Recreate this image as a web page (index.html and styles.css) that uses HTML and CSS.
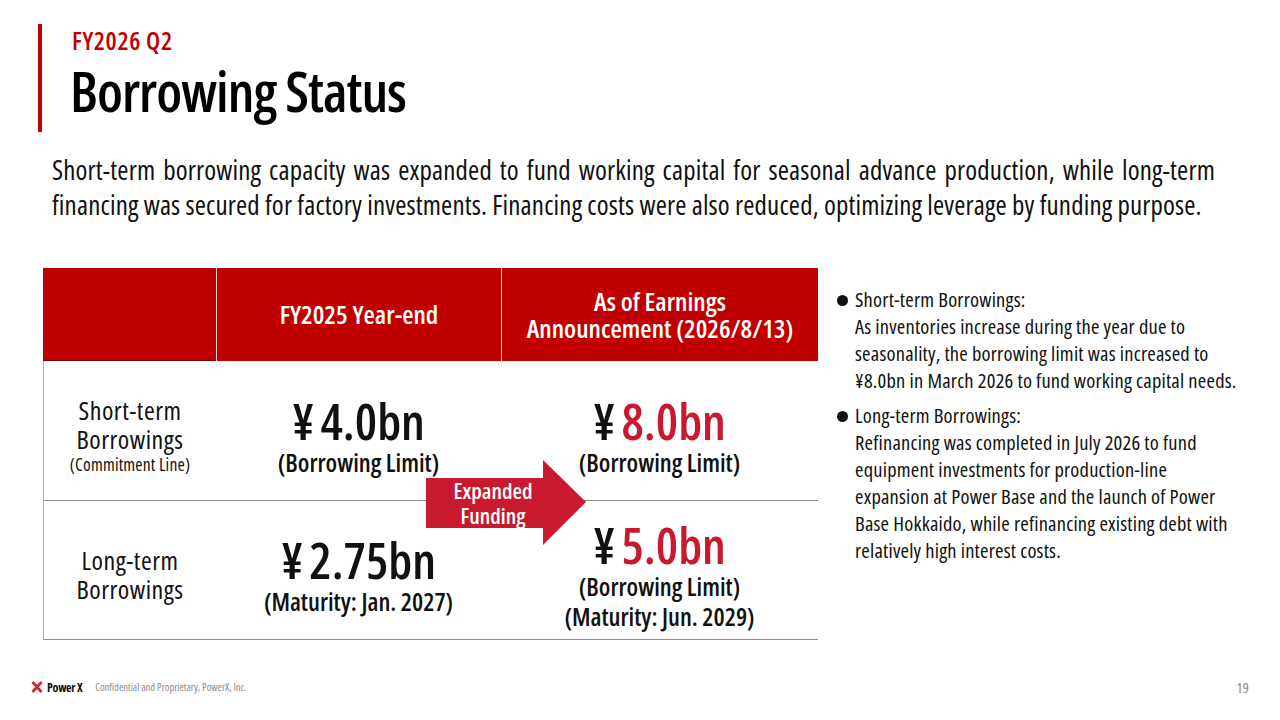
FILE: index.html
```html
<!DOCTYPE html>
<html lang="en">
<head>
<meta charset="utf-8">
<title>Borrowing Status</title>
<link rel="stylesheet" href="styles.css">
</head>
<body>
<div class="slide">
  <header class="title-block">
    <div class="period">FY2026 Q2</div>
    <h1 class="title">Borrowing Status</h1>
  </header>

  <p class="lead">Short-term borrowing capacity was expanded to fund working capital for seasonal advance production, while long-term financing was secured for factory investments. Financing costs were also reduced, optimizing leverage by funding purpose.</p>

  <div class="main">
    <div class="table">
      <div class="th th-blank"></div>
      <div class="th">FY2025 Year-end</div>
      <div class="th">As of Earnings<br>Announcement (2026/8/13)</div>

      <div class="td label">
        <span>Short-term<br>Borrowings</span>
        <span class="note">(Commitment Line)</span>
      </div>
      <div class="td value">
        <span class="amount"><span class="yen">¥</span>4.0bn</span>
        <span class="sub">(Borrowing Limit)</span>
      </div>
      <div class="td value">
        <span class="amount"><span class="yen">¥</span><em>8.0bn</em></span>
        <span class="sub">(Borrowing Limit)</span>
      </div>

      <div class="td label">
        <span>Long-term<br>Borrowings</span>
      </div>
      <div class="td value">
        <span class="amount"><span class="yen">¥</span>2.75bn</span>
        <span class="sub">(Maturity: Jan. 2027)</span>
      </div>
      <div class="td value">
        <span class="amount"><span class="yen">¥</span><em>5.0bn</em></span>
        <span class="sub">(Borrowing Limit)</span>
        <span class="sub">(Maturity: Jun. 2029)</span>
      </div>

      <div class="arrow">
        <svg width="160" height="85" viewBox="0 0 160 85" aria-hidden="true">
          <polygon points="0,18 117,18 117,0 160,42 117,85 117,68 0,68" fill="#C8192E"/>
        </svg>
        <div class="arrow-text">Expanded<br>Funding</div>
      </div>
    </div>

    <ul class="notes">
      <li>Short-term Borrowings:<br>As inventories increase during the year due to<br>seasonality, the borrowing limit was increased to<br>¥8.0bn in March 2026 to fund working capital needs.</li>
      <li>Long-term Borrowings:<br>Refinancing was completed in July 2026 to fund<br>equipment investments for production-line<br>expansion at Power Base and the launch of Power<br>Base Hokkaido, while refinancing existing debt with<br>relatively high interest costs.</li>
    </ul>
  </div>

  <footer class="footer">
    <div class="brand">
      <svg class="logo" width="12" height="12" viewBox="0 0 12 12" aria-hidden="true">
        <path d="M1.5 1 L10.5 11 M10.5 1 L1.5 11" stroke="#D2262E" stroke-width="2.8" fill="none"/>
      </svg>
      <span class="brand-name">Power X</span>
      <span class="confidential">Confidential and Proprietary, PowerX, Inc.</span>
    </div>
    <span class="page">19</span>
  </footer>
</div>
</body>
</html>
```
FILE: styles.css
```css
html, body {
  margin: 0;
  padding: 0;
  background: #ffffff;
}

body {
  font-family: "Open Sans", "Roboto Condensed", "Liberation Sans", sans-serif;
  font-stretch: 75%;
  color: #111111;
}

.slide {
  width: 1280px;
  height: 720px;
  display: flex;
  flex-direction: column;
  overflow: hidden;
}

/* Title */
.title-block {
  margin: 24px 0 0 38px;
  height: 108px;
  box-sizing: border-box;
  border-left: 4px solid #C00000;
  padding: 2px 0 0 30px;
}

.period {
  font-size: 25px;
  line-height: 28px;
  font-weight: 600;
  letter-spacing: 0.6px;
  color: #C00000;
}

.title {
  margin: 6px 0 0 -2px;
  font-size: 56px;
  line-height: 60px;
  font-weight: 600;
  letter-spacing: -1px;
  color: #000000;
}

/* Lead paragraph */
.lead {
  margin: 20px 0 0 52px;
  width: 1163px;
  font-size: 27px;
  line-height: 35px;
  letter-spacing: 0.15px;
  text-align: justify;
  color: #111111;
}

/* Main area */
.main {
  display: flex;
  margin: 46px 0 0 43px;
}

.table {
  position: relative;
  width: 775px;
  display: grid;
  grid-template-columns: 173px 285px 317px;
  grid-template-rows: 93px 140px 139px;
}

.th {
  background: #C00000;
  color: #ffffff;
  font-weight: 600;
  font-size: 26px;
  line-height: 27px;
  display: flex;
  align-items: center;
  justify-content: center;
  text-align: center;
  border-left: 1px solid rgba(255, 255, 255, 0.85);
}

.th-blank {
  border-left: none;
  border-bottom: 1px solid #6a0000;
}

.td {
  display: flex;
  flex-direction: column;
  align-items: center;
  justify-content: center;
  text-align: center;
  box-sizing: border-box;
  padding-top: 10px;
  border-bottom: 1.5px solid #8c8c8c;
}

.label {
  border-left: 1px solid #b5b5b5;
  font-size: 26px;
  line-height: 29px;
  letter-spacing: 0.5px;
  color: #111111;
}

.label .note {
  font-size: 17.5px;
  line-height: 20px;
  letter-spacing: 0.2px;
  margin-bottom: 2px;
}

.amount {
  font-size: 50px;
  line-height: 52px;
  font-weight: 600;
  color: #111111;
}

.amount .yen {
  margin-right: 6px;
}

.amount em {
  font-style: normal;
  color: #C8192E;
}

.sub {
  font-size: 25px;
  line-height: 30px;
  font-weight: 600;
  color: #111111;
}

/* Arrow overlay */
.arrow {
  position: absolute;
  left: 383px;
  top: 192px;
  width: 160px;
  height: 85px;
}

.arrow svg {
  display: block;
}

.arrow-text {
  position: absolute;
  left: 0;
  top: 18px;
  width: 134px;
  height: 50px;
  display: flex;
  align-items: center;
  justify-content: center;
  text-align: center;
  color: #ffffff;
  font-size: 22px;
  line-height: 25px;
  font-weight: 600;
}

/* Notes */
.notes {
  list-style: none;
  margin: 0;
  padding: 18px 0 0 37px;
  font-size: 20.5px;
  line-height: 27px;
  letter-spacing: 0.2px;
  color: #111111;
  white-space: nowrap;
}

.notes li {
  position: relative;
  margin-bottom: 8px;
}

.notes li::before {
  content: "";
  position: absolute;
  left: -18px;
  top: 9px;
  width: 11px;
  height: 11px;
  border-radius: 50%;
  background: #111111;
}

/* Footer */
.footer {
  margin-top: auto;
  height: 20px;
  margin-bottom: 23px;
  display: flex;
  align-items: center;
  justify-content: space-between;
  padding: 0 31px 0 31px;
}

.brand {
  display: flex;
  align-items: center;
}

.logo {
  display: block;
}

.brand-name {
  margin-left: 4px;
  font-size: 12px;
  font-weight: 700;
  letter-spacing: -0.3px;
  color: #111111;
}

.confidential {
  margin-left: 13px;
  font-size: 10.5px;
  color: #8a8a8a;
}

.page {
  font-size: 15px;
  color: #8a8a8a;
}
```
